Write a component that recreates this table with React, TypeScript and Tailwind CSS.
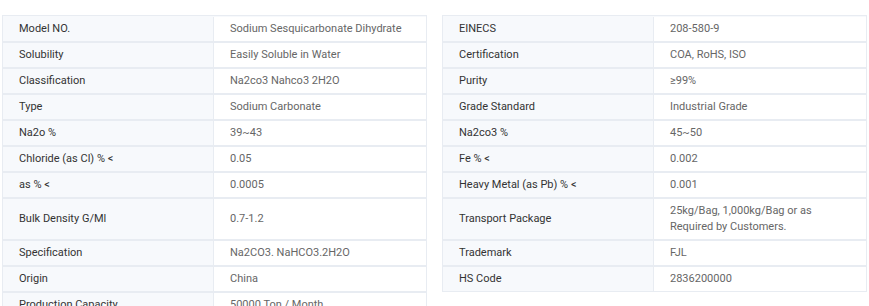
const left: [string, string][] = [
  ["Model NO.", "Sodium Sesquicarbonate Dihydrate"],
  ["Solubility", "Easily Soluble in Water"],
  ["Classification", "Na2co3 Nahco3 2H2O"],
  ["Type", "Sodium Carbonate"],
  ["Na2o %", "39~43"],
  ["Chloride (as Cl) % <", "0.05"],
  ["as % <", "0.0005"],
  ["Bulk Density G/Ml", "0.7-1.2"],
  ["Specification", "Na2CO3. NaHCO3.2H2O"],
  ["Origin", "China"],
  ["Production Capacity", "50000 Ton / Month"],
];

const right: [string, string][] = [
  ["EINECS", "208-580-9"],
  ["Certification", "COA, RoHS, ISO"],
  ["Purity", "≥99%"],
  ["Grade Standard", "Industrial Grade"],
  ["Na2co3 %", "45~50"],
  ["Fe % <", "0.002"],
  ["Heavy Metal (as Pb) % <", "0.001"],
  ["Transport Package", "25kg/Bag, 1,000kg/Bag or as Required by Customers."],
  ["Trademark", "FJL"],
  ["HS Code", "2836200000"],
];

function Table({ rows }: { rows: [string, string][] }) {
  return (
    <div className="w-[425px] border border-[#e8ecf2] self-start">
      {rows.map(([k, v], i) => (
        <div
          key={k}
          className={`flex ${i > 0 ? "border-t-2 border-[#e8ecf2]" : "border-t border-[#f7f9fc]"} ${k === "Transport Package" || k === "Bulk Density G/Ml" ? "min-h-[42px]" : "min-h-[24px]"}`}
        >
          <div className="w-[211px] shrink-0 bg-[#f7f9fc] border-r border-[#e8ecf2] pl-4 pr-3 flex items-center text-[#333] leading-4">
            {k}
          </div>
          <div className="flex-1 pl-4 pr-4 flex items-center text-[#666] leading-4 py-1">
            {v}
          </div>
        </div>
      ))}
    </div>
  );
}

export default function App() {
  return (
    <div className="w-[869px] h-[306px] overflow-hidden bg-white pt-[15px] pl-[2px] text-[11px] font-['Roboto',sans-serif]">
      <div className="flex gap-[15px] items-start">
        <Table rows={left} />
        <Table rows={right} />
      </div>
    </div>
  );
}
